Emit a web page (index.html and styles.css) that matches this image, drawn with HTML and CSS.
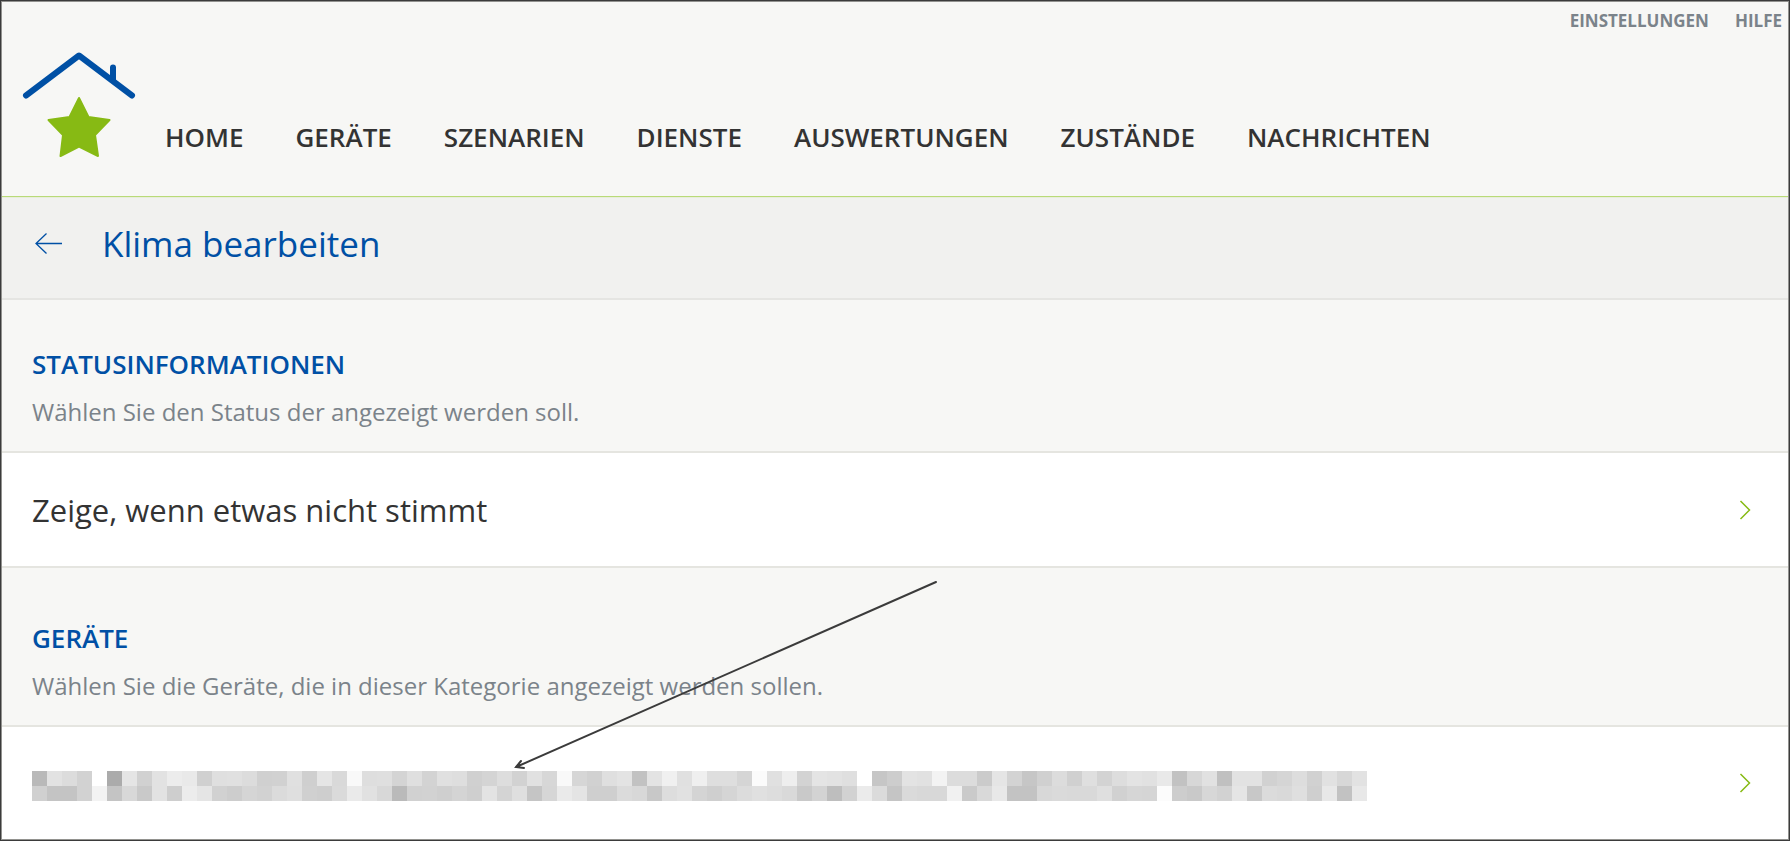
FILE: index.html
```html
<!DOCTYPE html>
<html lang="de">
<head>
<meta charset="utf-8">
<meta name="viewport" content="width=device-width, initial-scale=1">
<title>Klima bearbeiten</title>
<link rel="stylesheet" href="styles.css">
</head>
<body>
<div class="frame">
<div class="page">
  <header class="header">
    <a class="logo" href="#" aria-label="Startseite">
      <svg width="114" height="106" viewBox="22 52 114 106" aria-hidden="true">
        <path class="roof" d="M26 95.500L79 55.500L132 95.500M113 67.500V80"/>
        <path class="star" d="M79 98L88.500 117L109.500 120L95 135L98 156L79 146.500L60.500 156L63 135L48.500 120L69.500 117Z"/>
      </svg>
    </a>
    <nav class="nav">
      <a href="#">HOME</a>
      <a href="#">GERÄTE</a>
      <a href="#">SZENARIEN</a>
      <a href="#">DIENSTE</a>
      <a href="#">AUSWERTUNGEN</a>
      <a href="#">ZUSTÄNDE</a>
      <a href="#">NACHRICHTEN</a>
    </nav>
    <nav class="utility">
      <a href="#">EINSTELLUNGEN</a>
      <a href="#">HILFE</a>
    </nav>
  </header>

  <div class="titlebar">
    <button class="back" type="button" aria-label="Zurück">
      <svg width="28" height="22" viewBox="0 0 28 22" aria-hidden="true"><path d="M11.500 0.500L1 10.500L11.500 20.500M1 10.500H27"/></svg>
    </button>
    <h1>Klima bearbeiten</h1>
  </div>

  <main>
    <section class="intro">
      <h2>STATUSINFORMATIONEN</h2>
      <p>Wählen Sie den Status der angezeigt werden soll.</p>
    </section>
    <button class="row" type="button">
      <span>Zeige, wenn etwas nicht stimmt</span>
      <svg class="chevron" width="12" height="20" viewBox="0 0 12 20" aria-hidden="true"><path d="M1.500 1L10.500 10L1.500 19"/></svg>
    </button>
    <section class="intro intro-devices">
      <h2>GERÄTE</h2>
      <p>Wählen Sie die Geräte, die in dieser Kategorie angezeigt werden sollen.</p>
    </section>
    <button class="row row-last" type="button" aria-label="Gerät">
      <svg class="mosaic" width="1335" height="30" viewBox="0 0 1335 30" shape-rendering="crispEdges" aria-hidden="true"></svg>
      <svg class="chevron" width="12" height="20" viewBox="0 0 12 20" aria-hidden="true"><path d="M1.500 1L10.500 10L1.500 19"/></svg>
    </button>
  </main>

  <svg class="pointer" width="424" height="190" viewBox="514 580 424 190" aria-hidden="true">
    <path d="M936 582L516 767M521 761L516 767L524 768"/>
  </svg>
</div>
</div>
<script src="mosaic.js"></script>
</body>
</html>
```

FILE: styles.css
```css
* {
  box-sizing: border-box;
}

body {
  margin: 0;
  background: #fff;
  color: #333;
  font-family: "Open Sans", "Noto Sans", sans-serif;
}

a {
  color: inherit;
  text-decoration: none;
}

button {
  margin: 0;
  border: 0;
  background: none;
  color: inherit;
  font: inherit;
  cursor: pointer;
}

h1,
h2,
p {
  margin: 0;
}

svg {
  display: block;
  fill: none;
}

.frame {
  border: 1px solid #3b3b3b;
}

.page {
  position: relative;
  display: flex;
  flex-direction: column;
  min-height: calc(100vh - 2px);
  border: 1px solid #92928f;
}

.header {
  display: flex;
  align-items: flex-end;
  min-height: 195px;
  padding: 7px 6px 38px 20px;
  border-bottom: 1px solid #b9da78;
  background: #f7f7f5;
}

.roof {
  stroke: #0050a5;
  stroke-width: 6;
  stroke-linecap: round;
  stroke-linejoin: round;
}

.star {
  fill: #87ba14;
  stroke: #87ba14;
  stroke-width: 2;
  stroke-linejoin: round;
}

.nav {
  display: flex;
  gap: 52px;
  padding: 0 0 3px 29px;
  font-size: 26px;
  font-weight: 600;
  line-height: 36px;
}

.utility {
  display: flex;
  align-self: flex-start;
  gap: 26px;
  margin-left: auto;
  color: #7b838a;
  font-size: 17px;
  font-weight: 700;
  line-height: 24px;
}

.titlebar {
  display: flex;
  align-items: center;
  gap: 39px;
  padding: 23px 33px 31px;
  border-top: 1px solid #e8eedb;
  border-bottom: 2px solid #e5e5e2;
  background: #f1f1ef;
}

.titlebar h1 {
  color: #0050a5;
  font-size: 35px;
  font-weight: 400;
  line-height: 46px;
}

.back {
  padding: 0;
}

.back path {
  stroke: #0050a5;
  stroke-width: 1.300;
}

.intro {
  padding: 46px 30px 23px;
  border-bottom: 2px solid #e5e5e0;
  background: #f7f7f5;
}

.intro-devices {
  padding-top: 52px;
}

.intro h2 {
  margin-bottom: 14px;
  color: #0050a5;
  font-size: 26px;
  font-weight: 600;
  line-height: 36px;
}

.intro p {
  color: #7b838a;
  font-size: 24px;
  line-height: 32px;
}

.row {
  display: flex;
  align-items: center;
  justify-content: space-between;
  width: 100%;
  min-height: 115px;
  padding: 36px 37px 36px 30px;
  border-bottom: 2px solid #e5e5e0;
  background: #fff;
  font-size: 31px;
  line-height: 40px;
  text-align: left;
}

.row-last {
  min-height: 112px;
  border-bottom: 0;
}

.chevron {
  flex: none;
}

.chevron path {
  stroke: #87ba14;
  stroke-width: 1.500;
}

.mosaic {
  min-width: 0;
  margin-top: 6px;
}

.pointer {
  position: absolute;
  top: 578px;
  left: 512px;
  pointer-events: none;
}

.pointer path {
  stroke: #3b3b3b;
  stroke-width: 2;
  stroke-linecap: round;
}
```

FILE: mosaic.js
```js
// Grey levels of the anonymised device name, one hex byte per tile.
const rows = [
  "b9e2dcd2ffabe5d1e2ece9d0dfe0dcd0d1e0cfe5d9f9" +
  "dedfd4dfd3e0ded0d4ddd2e1d7f9d6d1dfe3c2e3f0e0ef" +
  "deded5fbe0eed3e4e2dfffc6cde3e1f3dcdccbe5d3c6d0" +
  "dcd0dfd3dde3e1e9c2d7e1c0e2e2d1d5ddd1e1d7e2",
  "d0c4c4d2f3c4d8c9e2ceece5d1cdd5d2dbdfd0cedaea" +
  "e1d8bad1d2cfd4cfe3d4dfc5d6eae4cfcfdbd8c8dde1d4" +
  "cfd5dce0ddd9c9d3bed2ebdbc5dad8d8f1cad9e8c3c3d8" +
  "dad9d9dfd1d6d5fccdc9d7d2e5c8dbd9dfcfe8c2e8"
];
const size = 15;
const mosaic = document.querySelector(".mosaic");

rows.forEach((row, y) => {
  row.match(/../g).forEach((level, x) => {
    const tile = document.createElementNS("http://www.w3.org/2000/svg", "rect");
    tile.setAttribute("x", x * size);
    tile.setAttribute("y", y * size);
    tile.setAttribute("width", size);
    tile.setAttribute("height", size);
    tile.setAttribute("fill", "#" + level + level + level);
    mosaic.append(tile);
  });
});
```
